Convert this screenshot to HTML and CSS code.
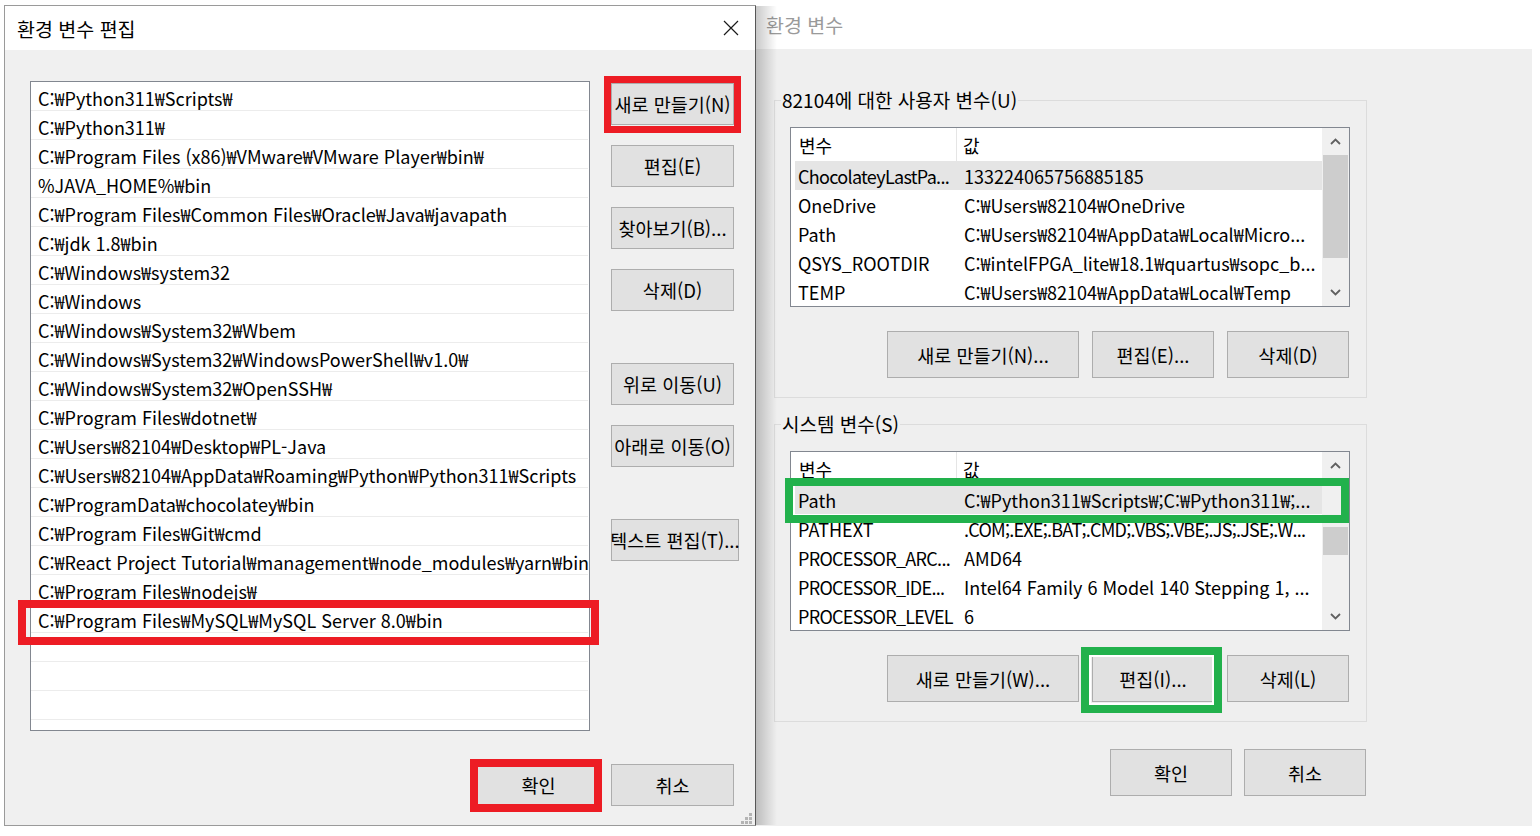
FILE: index.html
```html
<!DOCTYPE html>
<html lang="ko">
<head>
<meta charset="utf-8">
<title>환경 변수 편집</title>
<link rel="stylesheet" href="styles.css">
</head>
<body>
<div class="desktop">

  <section class="win env">
    <header class="titlebar">환경 변수</header>
    <div class="env-body">
      <fieldset class="group">
        <legend>82104에 대한 사용자 변수(U)</legend>
        <div class="lv">
          <div class="lv-main">
            <div class="lv-head"><span class="c1">변수</span><span class="c2">값</span></div>
            <div class="lv-row sel"><span class="c1 fit">ChocolateyLastPa...</span><span class="c2">133224065756885185</span></div>
            <div class="lv-row"><span class="c1">OneDrive</span><span class="c2">C:₩Users₩82104₩OneDrive</span></div>
            <div class="lv-row"><span class="c1">Path</span><span class="c2">C:₩Users₩82104₩AppData₩Local₩Micro...</span></div>
            <div class="lv-row"><span class="c1">QSYS_ROOTDIR</span><span class="c2">C:₩intelFPGA_lite₩18.1₩quartus₩sopc_b...</span></div>
            <div class="lv-row"><span class="c1">TEMP</span><span class="c2">C:₩Users₩82104₩AppData₩Local₩Temp</span></div>
          </div>
          <div class="sb">
            <div class="sb-btn"><svg width="11" height="7" viewBox="0 0 11 7"><path d="M1 6 L5.5 1.5 L10 6" fill="none" stroke="#606060" stroke-width="1.8"/></svg></div>
            <div class="sb-track"><div class="sb-thumb thumb-user"></div></div>
            <div class="sb-btn"><svg width="11" height="7" viewBox="0 0 11 7"><path d="M1 1 L5.5 5.5 L10 1" fill="none" stroke="#606060" stroke-width="1.8"/></svg></div>
          </div>
        </div>
        <div class="btnrow">
          <button class="btn wide">새로 만들기(N)...</button>
          <button class="btn">편집(E)...</button>
          <button class="btn">삭제(D)</button>
        </div>
      </fieldset>

      <fieldset class="group sys">
        <legend>시스템 변수(S)</legend>
        <div class="lv">
          <div class="lv-main">
            <div class="lv-head"><span class="c1">변수</span><span class="c2">값</span></div>
            <div class="lv-row sel"><span class="c1">Path</span><span class="c2">C:₩Python311₩Scripts₩;C:₩Python311₩;...</span></div>
            <div class="lv-row"><span class="c1">PATHEXT</span><span class="c2 fit-v">.COM;.EXE;.BAT;.CMD;.VBS;.VBE;.JS;.JSE;.W...</span></div>
            <div class="lv-row"><span class="c1 fit">PROCESSOR_ARC...</span><span class="c2">AMD64</span></div>
            <div class="lv-row"><span class="c1 fit">PROCESSOR_IDE...</span><span class="c2">Intel64 Family 6 Model 140 Stepping 1, ...</span></div>
            <div class="lv-row"><span class="c1 fit">PROCESSOR_LEVEL</span><span class="c2">6</span></div>
          </div>
          <div class="sb">
            <div class="sb-btn"><svg width="11" height="7" viewBox="0 0 11 7"><path d="M1 6 L5.5 1.5 L10 6" fill="none" stroke="#606060" stroke-width="1.8"/></svg></div>
            <div class="sb-track"><div class="sb-thumb thumb-sys"></div></div>
            <div class="sb-btn"><svg width="11" height="7" viewBox="0 0 11 7"><path d="M1 1 L5.5 5.5 L10 1" fill="none" stroke="#606060" stroke-width="1.8"/></svg></div>
          </div>
        </div>
        <div class="btnrow">
          <button class="btn wide">새로 만들기(W)...</button>
          <button class="btn">편집(I)...</button>
          <button class="btn">삭제(L)</button>
        </div>
      </fieldset>

      <div class="env-foot">
        <button class="btn">확인</button>
        <button class="btn">취소</button>
      </div>
    </div>
  </section>

  <section class="win edit">
    <header class="titlebar">
      <span>환경 변수 편집</span>
      <svg class="close" width="16" height="16" viewBox="0 0 16 16"><path d="M1 1 L15 15 M15 1 L1 15" stroke="#1a1a1a" stroke-width="1.2" fill="none"/></svg>
    </header>
    <div class="edit-body">
      <div class="edit-main">
        <ul class="pathlist">
          <li>C:₩Python311₩Scripts₩</li>
          <li>C:₩Python311₩</li>
          <li>C:₩Program Files (x86)₩VMware₩VMware Player₩bin₩</li>
          <li>%JAVA_HOME%₩bin</li>
          <li>C:₩Program Files₩Common Files₩Oracle₩Java₩javapath</li>
          <li>C:₩jdk 1.8₩bin</li>
          <li>C:₩Windows₩system32</li>
          <li>C:₩Windows</li>
          <li>C:₩Windows₩System32₩Wbem</li>
          <li>C:₩Windows₩System32₩WindowsPowerShell₩v1.0₩</li>
          <li>C:₩Windows₩System32₩OpenSSH₩</li>
          <li>C:₩Program Files₩dotnet₩</li>
          <li>C:₩Users₩82104₩Desktop₩PL-Java</li>
          <li>C:₩Users₩82104₩AppData₩Roaming₩Python₩Python311₩Scripts</li>
          <li>C:₩ProgramData₩chocolatey₩bin</li>
          <li>C:₩Program Files₩Git₩cmd</li>
          <li>C:₩React Project Tutorial₩management₩node_modules₩yarn₩bin</li>
          <li>C:₩Program Files₩nodejs₩</li>
          <li>C:₩Program Files₩MySQL₩MySQL Server 8.0₩bin</li>
          <li></li>
          <li></li>
          <li></li>
        </ul>
        <div class="side">
          <button class="btn">새로 만들기(N)</button>
          <button class="btn">편집(E)</button>
          <button class="btn">찾아보기(B)...</button>
          <button class="btn">삭제(D)</button>
          <button class="btn spaced">위로 이동(U)</button>
          <button class="btn">아래로 이동(O)</button>
          <button class="btn spaced wider">텍스트 편집(T)...</button>
        </div>
      </div>
      <div class="edit-foot">
        <button class="btn">확인</button>
        <button class="btn">취소</button>
      </div>
    </div>
    <svg class="grip" width="12" height="12" viewBox="0 0 12 12">
      <rect x="8" y="0" width="3" height="3" fill="#b4b4b4"/>
      <rect x="4" y="4" width="3" height="3" fill="#b4b4b4"/>
      <rect x="8" y="4" width="3" height="3" fill="#b4b4b4"/>
      <rect x="0" y="8" width="3" height="3" fill="#b4b4b4"/>
      <rect x="4" y="8" width="3" height="3" fill="#b4b4b4"/>
      <rect x="8" y="8" width="3" height="3" fill="#b4b4b4"/>
    </svg>
  </section>

  <div class="mark red m-new"></div>
  <div class="mark red m-mysql"></div>
  <div class="mark red m-ok"></div>
  <div class="mark green m-path"></div>
  <div class="mark green m-edit"></div>
</div>
</body>
</html>
```

FILE: styles.css
```css
* { box-sizing: border-box; }
html, body { margin: 0; padding: 0; }
body {
  width: 1540px;
  height: 836px;
  overflow: hidden;
  background: #fff;
  color: #000;
  font-family: "Noto Sans CJK KR", "Noto Sans", sans-serif;
  font-size: 18px;
}
.desktop { position: relative; width: 1540px; height: 836px; }

.win { position: absolute; display: flex; flex-direction: column; }
.titlebar { flex: none; background: #fff; display: flex; align-items: center; font-size: 19.5px; }

.btn {
  font: inherit;
  font-size: 18.5px;
  color: #000;
  background: #e1e1e1;
  border: 1px solid #adadad;
  border-radius: 0;
  padding: 0;
  margin: 0;
  flex: none;
  white-space: nowrap;
  display: flex;
  align-items: center;
  justify-content: center;
}

/* ---------- background window ---------- */
.env { left: 754px; top: 0; width: 778px; height: 826px; background: #efefef; }
.env .titlebar { height: 49px; padding-left: 12px; color: #9a9a9a; }
.env-body { padding: 39px 0 0 20px; display: flex; flex-direction: column; }

.group {
  margin: 0;
  width: 593px;
  border: 1px solid #dcdcdc;
  padding: 0 15px 19px 15px;
  min-width: 0;
}
.group.sys { margin-top: 14px; }
.group legend { padding: 0 1px; margin-left: -9px; line-height: 24px; font-size: 19px; }

.lv {
  margin-top: 15px;
  width: 560px;
  height: 180px;
  border: 1px solid #828790;
  background: #fff;
  display: flex;
}
.lv-main { flex: 1; min-width: 0; overflow: hidden; }
.lv-head { height: 33px; display: flex; align-items: center; }
.lv-head .c1 { flex: none; width: 166px; height: 100%; padding-left: 8px; border-right: 1px solid #e5e5e5; display: flex; align-items: center; }
.lv-head .c2 { padding-left: 6px; }
.lv-row { height: 29px; margin-left: 4px; padding-top: 1px; display: flex; align-items: center; white-space: nowrap; }
.lv-row.sel { background: #e5e5e5; }
.lv-row .c1 { flex: none; width: 163px; padding-left: 3px; }
.lv-row .c1.fit { letter-spacing: -0.7px; }
.lv-row .c2 { padding-left: 6px; }
.lv-row .c2.fit-v { letter-spacing: -0.75px; }

.sb { flex: none; width: 27px; background: #f0f0f0; display: flex; flex-direction: column; }
.sb-btn { height: 27px; flex: none; display: flex; align-items: center; justify-content: center; }
.sb-track { flex: 1; }
.sb-thumb { background: #cdcdcd; margin: 0 1px; }
.thumb-user { height: 103px; }
.thumb-sys { margin-top: 48px; height: 28px; }

.btnrow { margin-top: 24px; display: flex; justify-content: flex-end; gap: 13px; padding-right: 2px; }
.btnrow .btn { width: 122px; height: 47px; }
.btnrow .btn.wide { width: 192px; }

.env-foot { margin-top: 27px; width: 593px; display: flex; justify-content: flex-end; gap: 12px; padding-right: 1px; }
.env-foot .btn { width: 122px; height: 47px; }

/* ---------- front dialog ---------- */
.edit {
  left: 4px; top: 5px; width: 752px; height: 821px;
  background: #f0f0f0;
  border: 1px solid #9a9a9a;
  border-right-color: #6e6e6e;
}
.edit::after {
  content: "";
  position: absolute;
  left: 100%; top: 0; bottom: 0;
  width: 22px;
  background: linear-gradient(to right, rgba(0,0,0,0.22), rgba(0,0,0,0));
}
.edit .titlebar { height: 44px; padding: 0 16px 0 12px; justify-content: space-between; }
.edit-body { padding: 31px 21px 0 25px; display: flex; flex-direction: column; }
.edit-main { display: flex; align-items: flex-start; }

.pathlist {
  flex: none;
  list-style: none;
  margin: 0;
  padding: 0;
  width: 560px;
  height: 650px;
  border: 1px solid #828790;
  background: #fff;
  overflow: hidden;
}
.pathlist li {
  height: 29px;
  padding: 4px 0 0 7px;
  margin-right: 1px;
  border-bottom: 1px solid #ececec;
  display: flex;
  align-items: center;
  white-space: nowrap;
}

.side { flex: none; margin-left: 21px; padding-top: 2px; display: flex; flex-direction: column; gap: 20px; }
.side .btn { width: 123px; height: 42px; }
.side .btn.spaced { margin-top: 32px; }
.side .btn.wider { width: 128px; }

.edit-foot { margin-top: 33px; display: flex; justify-content: flex-end; gap: 11px; }
.edit-foot .btn { width: 123px; height: 42px; }

.grip { position: absolute; right: 2px; bottom: 0; }

/* ---------- annotation boxes ---------- */
.mark { position: absolute; border: 8px solid; }
.red { border-color: #ed1c24; }
.green { border-color: #22b14c; }
.m-new { left: 604px; top: 76px; width: 137px; height: 57px; border-width: 7px; }
.m-mysql { left: 18px; top: 600px; width: 581px; height: 45px; }
.m-ok { left: 470px; top: 759px; width: 132px; height: 53px; }
.m-path { left: 785px; top: 478px; width: 564px; height: 45px; }
.m-edit { left: 1081px; top: 647px; width: 141px; height: 66px; box-shadow: inset 0 0 0 2px #fff; }
```
